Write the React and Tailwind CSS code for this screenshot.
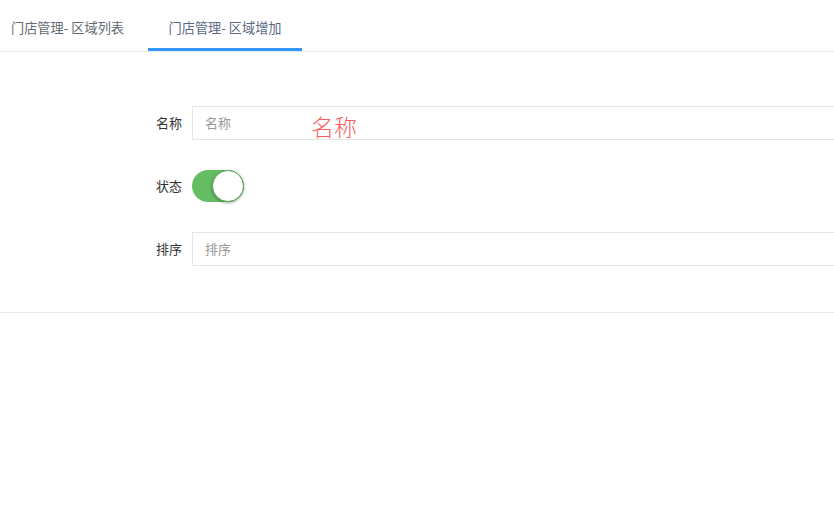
export default function App() {
  const font = { fontFamily: '"Noto Sans CJK SC", "Noto Sans", sans-serif' };
  return (
    <div className="w-[834px] h-[530px] bg-white overflow-hidden text-[13px]" style={font}>
      <div className="flex h-[52px] border-b border-[#e8e8e8]">
        <div className="flex items-center pl-[11px] pt-[4px] text-[#666a75] text-[13.2px]">门店管理- 区域列表</div>
        <div className="relative flex items-center ml-[24px] w-[154px] justify-center pt-[4px] text-[#5a6a85] text-[13.2px]">
          门店管理- 区域增加
          <div className="absolute left-0 right-0 bottom-[0px] h-[3px] bg-[#3296fa]"></div>
        </div>
      </div>
      <div className="border-b border-[#e8e8e8] pt-[54px] pb-[46px]">
        <div className="flex items-center h-[34px]">
          <div className="w-[182px] text-right pr-0 text-[#333]">名称</div>
          <div className="ml-[10px] flex-1 h-[34px] border border-[#e5e5e5] border-r-0 flex items-center pl-[12px] relative">
            <span className="text-[#999]">名称</span>
            <span className="absolute left-[118px] top-[6px] text-[23px] leading-[26px] font-light text-[#fb5b62]">名称</span>
          </div>
        </div>
        <div className="flex items-center h-[32px] mt-[30px]">
          <div className="w-[182px] text-right text-[#333]">状态</div>
          <div className="ml-[10px] w-[52px] h-[32px] rounded-full bg-[#64bd63] relative">
            <div className="absolute right-0 top-0 w-[32px] h-[32px] rounded-full bg-white border border-[#5aa85a] shadow-[0_1px_3px_rgba(0,0,0,0.35)]"></div>
          </div>
        </div>
        <div className="flex items-center h-[34px] mt-[30px]">
          <div className="w-[182px] text-right text-[#333]">排序</div>
          <div className="ml-[10px] flex-1 h-[34px] border border-[#e5e5e5] border-r-0 flex items-center pl-[12px]">
            <span className="text-[#999]">排序</span>
          </div>
        </div>
      </div>
    </div>
  );
}
